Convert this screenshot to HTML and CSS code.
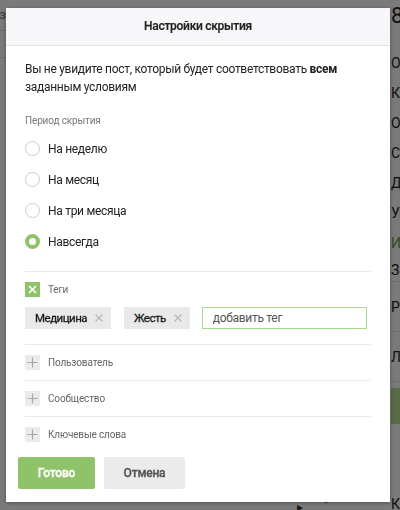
FILE: index.html
```html
<!DOCTYPE html>
<html lang="ru">

<head>
    <meta charset="UTF-8">
    <meta name="viewport" content="width=device-width, initial-scale=1.0">
    <title>Настройки скрытия</title>
    <link rel="stylesheet" href="styles.css">
</head>
<body>
    <div class="page">
        <div class="page-main">
            <div class="main-row"><span class="main-crumb">Раз</span></div>
            <div class="main-row"></div>
            <div class="main-fill"></div>
            <div class="main-bottom">
                <span class="main-arrow">&#9656;</span>
                <span class="main-arrow up">&#710;</span>
            </div>
        </div>
        <div class="page-side">
            <div class="side-count">8</div>
            <ul class="side-menu">
                <li>Отметить</li>
                <li>Копировать</li>
                <li>Открыть</li>
                <li>Сохранить</li>
                <li>Добавить</li>
                <li>Упомянуть</li>
                <li class="green">Интересное</li>
                <li>Заметки</li>
            </ul>
            <div class="side-block">Реклама</div>
            <div class="side-block">Лента</div>
            <div class="side-banner"></div>
            <div class="side-fill"></div>
            <div class="side-last">Ключи</div>
        </div>
    </div>

    <div class="overlay">
        <div class="modal">
            <div class="modal-head">Настройки скрытия</div>
            <div class="modal-body">
                <p class="desc">Вы не увидите пост, который будет соответствовать <b>всем</b> заданным условиям</p>

                <div class="period-title">Период скрытия</div>
                <ul class="radios">
                    <li class="radio-row"><span class="radio"></span>На неделю</li>
                    <li class="radio-row"><span class="radio"></span>На месяц</li>
                    <li class="radio-row"><span class="radio"></span>На три месяца</li>
                    <li class="radio-row"><span class="radio checked"></span>Навсегда</li>
                </ul>

                <div class="filter filter-tags">
                    <div class="filter-head">
                        <span class="box check">
                            <svg width="9" height="9" viewBox="0 0 9 9"><path d="M1 1L8 8M8 1L1 8" stroke="#fff" stroke-width="1.6"/></svg>
                        </span>
                        Теги
                    </div>
                    <div class="tags">
                        <span class="tag">Медицина
                            <svg width="8" height="8" viewBox="0 0 8 8"><path d="M0.5 0.5L7.5 7.5M7.5 0.5L0.5 7.5" stroke="#b5b5b5" stroke-width="1.1"/></svg>
                        </span>
                        <span class="tag">Жесть
                            <svg width="8" height="8" viewBox="0 0 8 8"><path d="M0.5 0.5L7.5 7.5M7.5 0.5L0.5 7.5" stroke="#b5b5b5" stroke-width="1.1"/></svg>
                        </span>
                        <input class="tag-input" type="text" placeholder="добавить тег">
                    </div>
                </div>

                <div class="filter">
                    <div class="filter-head">
                        <span class="box plus">
                            <svg width="11" height="11" viewBox="0 0 11 11"><path d="M5.5 0.5V10.5M0.5 5.5H10.5" stroke="#a8a8a8" stroke-width="1.2"/></svg>
                        </span>
                        Пользователь
                    </div>
                </div>
                <div class="filter">
                    <div class="filter-head">
                        <span class="box plus">
                            <svg width="11" height="11" viewBox="0 0 11 11"><path d="M5.5 0.5V10.5M0.5 5.5H10.5" stroke="#a8a8a8" stroke-width="1.2"/></svg>
                        </span>
                        Сообщество
                    </div>
                </div>
                <div class="filter">
                    <div class="filter-head">
                        <span class="box plus">
                            <svg width="11" height="11" viewBox="0 0 11 11"><path d="M5.5 0.5V10.5M0.5 5.5H10.5" stroke="#a8a8a8" stroke-width="1.2"/></svg>
                        </span>
                        Ключевые слова
                    </div>
                </div>
            </div>
            <div class="modal-foot">
                <button class="btn btn-ok">Готово</button>
                <button class="btn btn-cancel">Отмена</button>
            </div>
        </div>
    </div>
</body>
</html>
```

FILE: styles.css
```css
*{
    margin: 0;
    padding: 0;
    box-sizing: border-box;
}
li{
    list-style: none;
}
html, body{
    width: 400px;
    height: 510px;
    overflow: hidden;
}
body{
    background: #ffffff;
    font-family: Roboto, "Noto Sans", sans-serif;
    color: #222222;
}

/* page under the dialog */
.page{
    display: flex;
    width: 400px;
    height: 510px;
    overflow: hidden;
}
.page-main{
    width: 391px;
    flex: none;
    display: flex;
    flex-direction: column;
}
.main-row{
    height: 27px;
    border-bottom: 1px solid #e2e2e2;
    font-size: 13px;
    line-height: 30px;
    overflow: hidden;
}
.main-row:first-child{
    height: 31px;
}
.main-crumb{
    display: inline-block;
    margin-left: -16px;
    color: #777777;
}
.main-fill{
    flex: 1;
}
.main-bottom{
    height: 10px;
    display: flex;
    gap: 20px;
    padding-left: 297px;
    font-size: 12px;
    line-height: 14px;
    color: #333333;
    overflow: hidden;
}
.page-side{
    width: 240px;
    flex: none;
    display: flex;
    flex-direction: column;
    font-size: 14px;
    color: #222222;
}
.side-count{
    height: 32px;
    font-size: 22px;
    line-height: 32px;
    margin-bottom: 16px;
}
.side-menu li{
    height: 30px;
    line-height: 30px;
    white-space: nowrap;
}
.side-menu .green{
    color: #6f9a3f;
}
.side-menu li:last-child{
    height: 24px;
    line-height: 24px;
    border-bottom: 1px solid #e2e2e2;
}
.side-block{
    height: 50px;
    line-height: 50px;
    border-bottom: 1px solid #e2e2e2;
}
.side-banner{
    height: 36px;
    margin-top: 6px;
    background: #bcdf93;
}
.side-fill{
    flex: 1;
}
.side-last{
    height: 14px;
    line-height: 16px;
    overflow: hidden;
}

/* dialog */
.overlay{
    position: fixed;
    left: 0;
    top: 0;
    width: 400px;
    height: 510px;
    display: flex;
    padding: 8px 10px 8px 6px;
    background: rgba(0, 0, 0, 0.52);
}
.modal{
    width: 384px;
    flex: none;
    display: flex;
    flex-direction: column;
    background: #ffffff;
    box-shadow: 0 1px 4px rgba(0, 0, 0, 0.35);
    letter-spacing: -0.3px;
}
.modal-head{
    height: 38px;
    line-height: 37px;
    text-align: center;
    background: #f7f7f9;
    border-bottom: 1px solid #e4e4e6;
    font-size: 12px;
    font-weight: 500;
    color: #222222;
    -webkit-text-stroke: 0.2px #222222;
}
.modal-body{
    flex: 1;
    min-width: 0;
    padding: 14px 19px 0;
}
.desc{
    font-size: 12px;
    line-height: 18px;
    color: #222222;
}
.desc b{
    font-weight: 700;
}
.period-title{
    margin-top: 18px;
    font-size: 10px;
    line-height: 14px;
    letter-spacing: -0.15px;
    color: #777777;
}
.radios{
    margin-top: 5px;
    margin-bottom: 14px;
}
.radio-row{
    display: flex;
    align-items: center;
    gap: 8px;
    height: 31px;
    font-size: 12px;
    color: #222222;
}
.radio{
    width: 15px;
    height: 15px;
    flex: none;
    border: 1px solid #cccccc;
    border-radius: 50%;
    background: #ffffff;
}
.radio.checked{
    border: 4px solid #8fc36a;
}

.filter{
    border-top: 1px solid #ebebeb;
    padding: 10px 0;
}
.filter-tags{
    padding-bottom: 15px;
}
.filter-head{
    display: flex;
    align-items: center;
    gap: 8px;
    height: 15px;
    font-size: 10px;
    letter-spacing: -0.15px;
    color: #666666;
}
.box{
    width: 15px;
    height: 15px;
    flex: none;
    display: flex;
    align-items: center;
    justify-content: center;
}
.check{
    background: #8fc36a;
}
.plus{
    background: #ebebeb;
}
.tags{
    display: flex;
    gap: 13px;
    margin-top: 10px;
    height: 22px;
}
.tag{
    display: flex;
    align-items: center;
    gap: 8px;
    padding: 0 8px 0 10px;
    background: #e9e9e9;
    font-size: 11.5px;
    letter-spacing: -0.5px;
    color: #1a1a1a;
    -webkit-text-stroke: 0.3px #1a1a1a;
}
.tag svg{
    flex: none;
}
.tag-input{
    width: 165px;
    height: 22px;
    margin-left: -1px;
    padding-left: 10px;
    border: 1px solid #a9d98b;
    outline: none;
    font-family: Roboto, "Noto Sans", sans-serif;
    font-size: 12px;
    letter-spacing: -0.3px;
    color: #222222;
}
.tag-input::placeholder{
    color: #555555;
}

.modal-foot{
    display: flex;
    gap: 9px;
    padding: 5px 12px 13px;
}
.btn{
    height: 32px;
    border: none;
    border-radius: 2px;
    font-family: Roboto, "Noto Sans", sans-serif;
    font-size: 12px;
    font-weight: 500;
    letter-spacing: -0.2px;
}
.btn-ok{
    width: 77px;
    background: #8fc36a;
    color: #ffffff;
    -webkit-text-stroke: 0.3px #ffffff;
}
.btn-cancel{
    width: 81px;
    background: #ebebeb;
    color: #555555;
    -webkit-text-stroke: 0.3px #555555;
}
```
